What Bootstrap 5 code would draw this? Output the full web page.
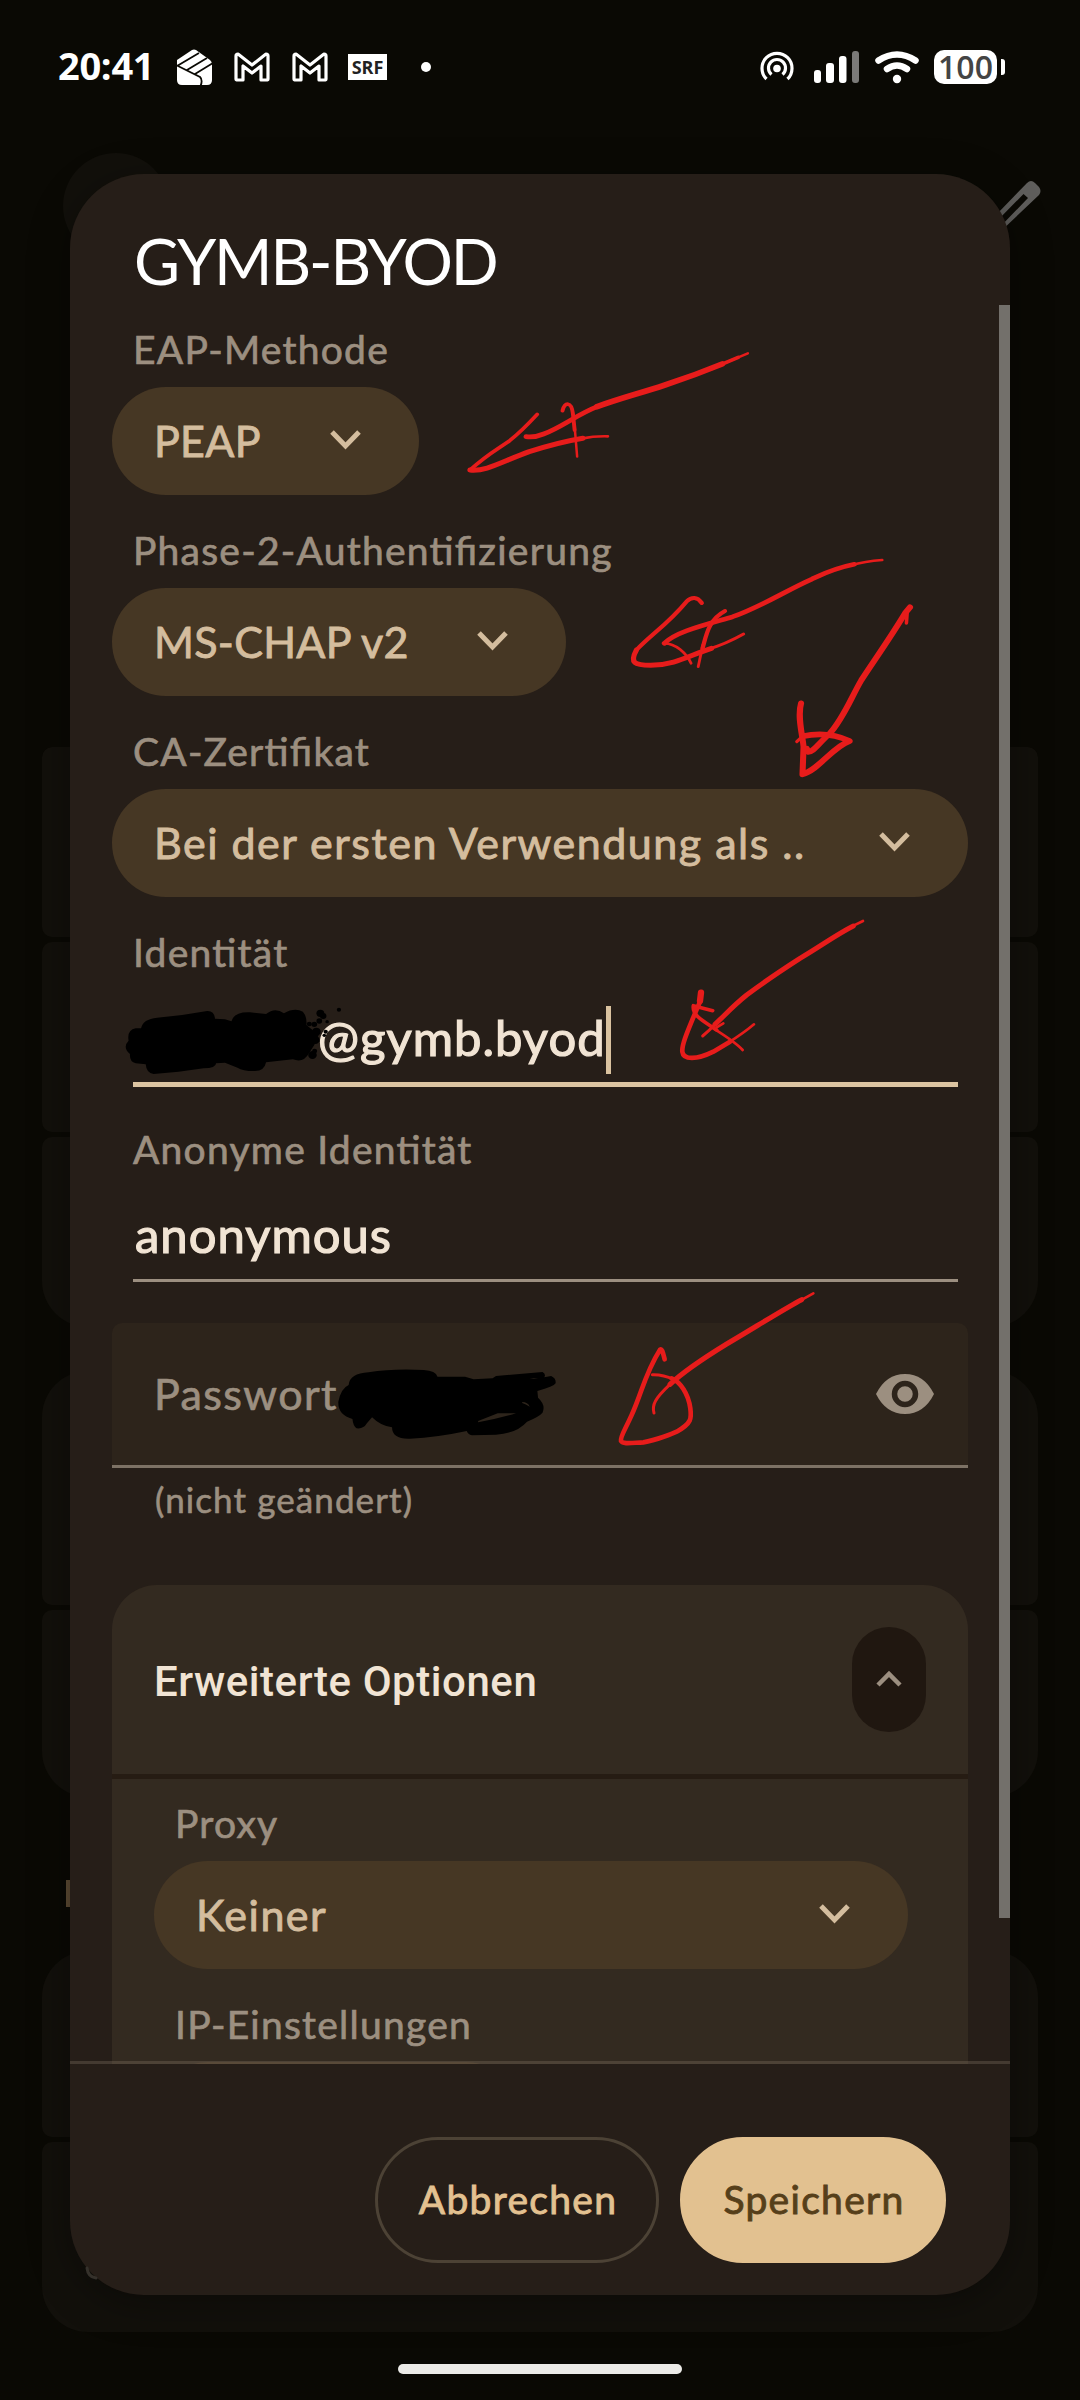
<!DOCTYPE html>
<html lang="de" data-bs-theme="dark">
<head>
<meta charset="utf-8">
<meta name="viewport" content="width=1080">
<title>WLAN bearbeiten</title>
<link href="https://cdn.jsdelivr.net/npm/bootstrap@5.3.0/dist/css/bootstrap.min.css" rel="stylesheet">
<style>
  html, body { width: 1080px; height: 2400px; overflow: hidden; }
  body { background: #0a0904; font-family: Lato, "Open Sans", sans-serif; color: #f1e4d4; position: relative; font-feature-settings: "liga" 1; }
  svg { display: block; flex: none; }
  .statusbar { height: 134px; padding: 0 75px 0 58px; color: #fff; }
  .clock { font: 700 38px/46px "Open Sans", sans-serif; letter-spacing: -.3px; width: 93px; padding-bottom: 5px; height: 50px; }
  .srf { width: 39px; height: 26px; background: #fff; color: #222; font: 700 18px/26px "Open Sans", sans-serif; text-align: center; }
  .batt { width: 63px; height: 34px; border-radius: 10px; background: #fff; color: #444; font: 600 32px/33px "Open Sans", sans-serif; text-align: center; }
  .nub { width: 4px; height: 16px; background: #fff; border-radius: 0 3px 3px 0; }
  .backdrop-list { padding: 613px 42px 0; }
  .bg-group { display: flex; flex-direction: column; gap: 5px; border-radius: 46px; overflow: hidden; }
  .bg-group:first-child { border-radius: 10px 10px 46px 46px; }
  .bg-group + .bg-group { margin-top: 44px; }
  .bg-group:last-child { margin-top: 154px; }
  .bg-row { height: 190px; background: #12100b; border-radius: 10px; }
  .bg-tall { height: 234px; }
  .bg-short { height: 187px; }
  .bg-low { height: 186px; }
  .under, .ink { position: absolute; left: 0; top: 0; }
  .sheet { position: absolute; left: 70px; top: 174px; width: 940px; height: 2121px; border-radius: 74px; background: #261e18; overflow: hidden; padding-top: 49px; box-shadow: 0 8px 40px rgba(0,0,0,.35); }
  .sheet-title { font-size: 63px; line-height: 76px; margin: 0 0 6px 64px; color: #fff; font-weight: 400; letter-spacing: -2.1px; }
  .scroller { height: 1759px; overflow: hidden; padding: 21px 42px 0; position: relative; }
  .thumb { position: absolute; right: 0; top: 0; width: 11px; height: 1613px; background: #73706b; }
  .fld { font-size: 39px; line-height: 47px; height: 48px; margin: 0 0 13px 21px; color: #9c8f80; white-space: nowrap; letter-spacing: 1.25px; -webkit-text-stroke: .7px; }
  .pill + .fld { margin-top: 32px; }
  .pill { height: 108px; border-radius: 54px; background: #463724; color: #d4bd9e; font-size: 43px; padding: 0 0 0 42px; white-space: nowrap; letter-spacing: 1.5px; -webkit-text-stroke: .9px; }
  .pill svg { margin-bottom: 2px; }
  .w-eap { width: 307px; padding-right: 58px; letter-spacing: .3px; } .w-phase { width: 454px; padding-right: 58px; letter-spacing: .3px; }
  .w-ca { width: 856px; padding-right: 58px; } .w-proxy { width: 754px; padding-right: 58px; } .w-ip { width: 366px; }
  .entry { margin: -13px 10px 0 21px; height: 108px; padding: 30px 0 0 2px; border-bottom: 3px solid #9c8f80; font-size: 49px; line-height: 60px; letter-spacing: 1px; -webkit-text-stroke: 1.2px; }
  .entry.active { height: 110px; border-bottom: 5px solid #dcc4a1; margin-bottom: 39px; padding-left: 185px; }
  .caret { width: 5px; height: 68px; background: #d9c29f; margin: -1px 0 0 0; }
  .pw { margin-top: 41px; height: 145px; padding: 0 34px 0 42px; border-radius: 10px 10px 0 0; background: #2d241b; border-bottom: 3px solid #7d7265; color: #9c8f80; font-size: 43px; line-height: 50px; letter-spacing: 1.4px; -webkit-text-stroke: .7px; }
  .hint { margin: 11px 0 66px 43px; font-size: 35px; line-height: 40px; color: #9c8f80; letter-spacing: 1.1px; -webkit-text-stroke: .6px; }
  .adv-head { height: 189px; border-radius: 45px 45px 0 0; background: #332a20; padding: 0 42px 0 42px; font: 500 42px/50px Roboto, sans-serif; margin-bottom: 5px; letter-spacing: .55px; }
  .adv-head .t { padding-top: 4px; }
  .adv-body { background: #332a20; padding: 21px 42px 0; height: 330px; box-shadow: 0 -5px #261c13; }
  .toggle { width: 74px; height: 105px; border-radius: 37px; background: #201710; padding-bottom: 1px; }
  .actions { position: relative; margin-top: -3px; border-top: 3px solid rgba(125,113,98,.35); height: 234px; padding: 73px 64px 0 0; gap: 21px; }
  .act { height: 126px; border-radius: 63px; font-size: 39px; padding: 0 0 2px 2px; border: 3px solid #4c4235; color: #e3c190; letter-spacing: 1.3px; -webkit-text-stroke: .9px; }
  .act-cancel { width: 284px; } .act-save { width: 266px; background: #e2c190; border-color: #e2c190; color: #563f1a; }
  .homebar { position: absolute; left: 398px; top: 2364px; width: 284px; height: 10px; border-radius: 5px; background: #ecebe8; }
</style>
</head>
<body>
<header class="statusbar d-flex align-items-center">
  <span class="clock">20:41</span>
  <svg class="ms-4" width="38" height="38" viewBox="0 0 38 38"><path d="M2 12 17 2q2-1 4 0l14 10q2 2 2 4v16q0 5-5 5H7q-5 0-5-5z" fill="#fff"/><path d="M1 17 25 29Q28 32 25.500 38M2 18 24 5M12 22 32 10M20 26 38 15" fill="none" stroke="#0a0904" stroke-width="1.800"/></svg>
  <svg width="36" height="30" viewBox="0 0 36 30" style="margin-left:21px"><path id="m" d="M2 27V4Q2 2 4 2L18 13 32 2Q34 2 34 4V27Q34 28 32 28H27V14L18 21 9 14V28H4Q2 28 2 27Z" fill="none" stroke="#fff" stroke-width="3.200" stroke-linejoin="round"/></svg>
  <svg width="36" height="30" viewBox="0 0 36 30" style="margin-left:22px"><use href="#m"/></svg>
  <span class="srf" style="margin-left:20px">SRF</span>
  <svg width="10" height="10" style="margin-left:34px"><circle cx="5" cy="5" r="5" fill="#fff"/></svg>
  <div class="ms-auto d-flex align-items-center">
    <svg width="34" height="34" viewBox="0 0 34 34"><g fill="none" stroke="#fff" stroke-width="3.200"><path d="M6.500 29A15 15 0 1 1 27.500 29"/><path d="M11.500 24.500A8.500 8.500 0 1 1 22.500 24.500"/></g><circle cx="17" cy="18.500" r="3.800" fill="#fff"/></svg>
    <svg width="46" height="34" viewBox="0 0 46 34" style="margin-left:20px"><g fill="#fff"><rect x="0" y="20" width="7" height="13" rx="3"/><rect x="12" y="13" width="8" height="20" rx="3"/><rect x="25" y="6" width="7.500" height="27" rx="3"/><rect x="38" y="1" width="7" height="32" rx="3" fill="#7b7a78"/></g></svg>
    <svg width="44" height="34" viewBox="0 0 44 34" style="margin-left:15px"><g fill="none" stroke="#fff" stroke-width="6.500" stroke-linecap="round"><path d="M3.500 10.500Q22-1.500 40.500 10.500"/><path d="M12 19Q22 12 32 19"/></g><circle cx="22" cy="29" r="4.200" fill="#fff"/></svg>
    <span class="batt" style="margin-left:15px">100</span><span class="nub ms-1"></span>
  </div>
</header>

<main class="backdrop-list">
  <div class="bg-group"><div class="bg-row"></div><div class="bg-row"></div><div class="bg-row"></div></div>
  <div class="bg-group"><div class="bg-row bg-tall"></div><div class="bg-row bg-short"></div></div>
  <div class="bg-group"><div class="bg-row bg-low"></div><div class="bg-row"></div></div>
</main>
<svg class="under" width="1080" height="2400"><circle cx="116" cy="206" r="53" fill="#12100b"/><path d="M996 215 1027 183Q1031 179 1035 183L1039 187Q1042 191 1039 195L1000 232ZM996 222 998 229 1028 198 1023.500 194Z" fill="#5f5e5c" fill-rule="evenodd"/><path d="M66 1880h4v27h-4z" fill="#5c4a33"/></svg>

<section class="sheet" role="dialog">
  <h1 class="sheet-title">GYMB-BYOD</h1>
  <div class="scroller">
    <div class="fld">EAP-Methode</div>
    <div class="pill w-eap d-flex align-items-center justify-content-between"><span>PEAP</span><svg width="31" height="20" viewBox="0 0 31 20"><path id="dn" d="M2 2 15.500 16 29 2" fill="none" stroke="#d4bd9e" stroke-width="5"/></svg></div>
    <div class="fld">Phase-2-Authentifizierung</div>
    <div class="pill w-phase d-flex align-items-center justify-content-between"><span>MS-CHAP v2</span><svg width="31" height="20"><use href="#dn"/></svg></div>
    <div class="fld">CA-Zertifikat</div>
    <div class="pill w-ca d-flex align-items-center justify-content-between"><span>Bei der ersten Verwendung als ..</span><svg width="31" height="20"><use href="#dn"/></svg></div>
    <div class="fld">Identität</div>
    <div class="entry active d-flex"><span>@gymb.byod</span><span class="caret"></span></div>
    <div class="fld">Anonyme Identität</div>
    <div class="entry">anonymous</div>
    <div class="pw d-flex align-items-center justify-content-between"><span>Passwort</span>
      <svg width="58" height="40" viewBox="0 0 58 40"><path d="M0 20Q10 0 29 0T58 20Q48 40 29 40T0 20Z" fill="#9c8f80"/><circle cx="29" cy="20" r="10.500" fill="none" stroke="#2d241b" stroke-width="5.500"/></svg></div>
    <div class="hint">(nicht geändert)</div>
    <div class="adv-head d-flex align-items-center justify-content-between"><span class="t">Erweiterte Optionen</span><span class="toggle d-flex align-items-center justify-content-center"><svg width="26" height="18" viewBox="0 0 26 18"><path d="M2 15 13 4 24 15" fill="none" stroke="#9c8f80" stroke-width="4.500"/></svg></span></div>
    <div class="adv-body">
      <div class="fld">Proxy</div>
      <div class="pill w-proxy d-flex align-items-center justify-content-between"><span>Keiner</span><svg width="31" height="20"><use href="#dn"/></svg></div>
      <div class="fld">IP-Einstellungen</div>
      <div class="pill w-ip"></div>
    </div>
    <div class="thumb"></div>
  </div>
  <div class="actions d-flex justify-content-end">
    <button class="btn act act-cancel">Abbrechen</button>
    <button class="btn act act-save">Speichern</button>
  </div>
</section>

<svg class="ink" width="1080" height="2400" fill="none" stroke-linecap="round" stroke-linejoin="round">
  <path d="M87 2268q1 9 9 10" stroke="#35312b" stroke-width="3"/>
  <g fill="#000">
    <g transform="translate(100 720) scale(.35714 .33333)">
      <path d="M115 925Q120 897 160 893L230 885 300 873Q320 872 322 896L350 898 368 904Q375 875 420 877L465 882Q490 860 515 880Q545 862 568 875Q580 890 578 915L612 945 600 975 585 1000Q570 1030 540 1018L465 1027Q460 1055 430 1053 400 1053 385 1043L350 1028 325 1030Q325 1045 290 1045L220 1055 150 1062Q130 1060 128 1033L100 1030Q82 1025 84 1002Q62 982 80 962Q75 930 100 925Z"/>
      <circle cx="617" cy="880" r="11"/><circle cx="625" cy="888" r="9"/><circle cx="669" cy="869" r="6"/><circle cx="636" cy="905" r="5"/><circle cx="600" cy="913" r="8"/><circle cx="614" cy="903" r="8"/><circle cx="586" cy="912" r="7"/><circle cx="606" cy="935" r="12"/><circle cx="632" cy="935" r="6"/><circle cx="628" cy="946" r="5"/><circle cx="603" cy="960" r="12"/><circle cx="595" cy="1005" r="12"/><circle cx="601" cy="993" r="7"/>
    </g>
    <g transform="translate(100 1100) scale(.34438 .33333)">
      <path d="M722 855Q725 820 780 817Q850 805 940 810Q975 812 980 830L1060 830 1085 838 1140 835 1150 828 1285 816Q1296 822 1290 832L1310 828Q1325 835 1323 850Q1318 860 1270 873L1272 893Q1295 915 1285 938Q1275 950 1240 965Q1210 1000 1150 1004L1080 1006Q1068 1003 1065 993Q980 1012 900 1016Q848 1018 848 982Q815 978 790 952L775 970Q765 988 745 985Q735 978 733 957Q690 945 692 905Q700 865 722 855Z"/>
      <path d="M1098 963 1155 940 1208 940Q1160 955 1098 967ZM1226 906Q1242 906 1248 920Q1236 912 1226 909ZM1248 836 1272 834 1260 837Z" fill="#2d241b"/>
    </g>
  </g>
  <g stroke="#e71c1b">
    <g transform="translate(440 330) scale(.35714 .33333)" stroke-width="13">
      <path d="M862 70 800 98" stroke-width="7"/><path d="M835 82 760 116" stroke-width="11"/><path d="M790 102C740 124 690 144 630 165 560 190 500 206 440 230" stroke-width="17"/><path d="M440 230C380 256 340 292 290 312 270 321 255 322 241 320" stroke-width="14"/>
      <path d="M272 253C240 290 215 315 195 332 150 365 130 375 84 420" stroke-width="11"/><path d="M84 420C130 425 170 396 250 365 310 345 360 332 400 325" stroke-width="15"/><path d="M400 325Q430 318 470 319" stroke-width="8"/>
      <path d="M343 242C350 215 368 215 372 250L377 300" stroke-width="11"/><path d="M377 290 384 380" stroke-width="7"/>
      <path d="M1238 690Q1190 694 1150 706" stroke-width="8"/><path d="M1160 703C1100 716 1070 733 1040 748 970 781 900 830 820 860 740 885 660 905 628 940" stroke-width="14"/><path d="M628 940C660 940 690 970 703 1000" stroke-width="8"/>
      <path d="M733 819C720 800 705 800 690 815 640 880 590 915 550 960" stroke-width="12"/><path d="M550 960C530 1000 545 1005 590 1006 660 1005 700 975 760 955" stroke-width="15"/><path d="M750 958Q800 942 850 912" stroke-width="9"/>
      <path d="M798 843C750 870 745 920 735 955" stroke-width="12"/><path d="M736 945 723 1010" stroke-width="8"/>
      <path d="M1306 879 1308 850" stroke-width="10"/><path d="M1316 832 1302 850C1260 925 1210 1000 1180 1050 1150 1105 1130 1165 1090 1212 1060 1240 1045 1268 1030 1266L1027 1256" stroke-width="17"/>
      <path d="M1011 1120C1000 1160 1015 1215 1018 1250L1015 1333C1060 1320 1100 1250 1147 1233 1100 1210 1060 1208 1015 1219" stroke-width="17"/><path d="M1015 1219 999 1235" stroke-width="9"/>
    </g>
    <g transform="translate(560 740) scale(.33333)" stroke-width="14">
      <path d="M909 543 870 562" stroke-width="8"/><path d="M880 558C830 583 780 620 720 655 650 700 600 735 560 765 520 797 500 820 465 853" stroke-width="15"/><path d="M468 850Q450 870 428 888" stroke-width="9"/>
      <path d="M423 758 420 783" stroke-width="19"/><path d="M418 790 405 820C380 880 365 915 367 935 370 960 410 960 460 935L510 905"/><path d="M505 908Q550 880 582 853" stroke-width="8"/>
      <path d="M458 812 400 797C395 830 440 848 470 870" stroke-width="11"/><path d="M460 865C500 890 530 910 548 930M470 862 490 850" stroke-width="8"/>
    </g>
    <g transform="translate(560 1260) scale(.33333)" stroke-width="14">
      <path d="M760 100 710 128" stroke-width="8"/><path d="M725 119C680 142 580 205 500 252 430 295 370 335 330 373" stroke-width="15"/><path d="M330 373C285 415 275 435 282 459" stroke-width="9"/>
      <path d="M314 298C308 275 306 265 300 269 255 340 245 400 215 465 195 510 180 530 183 543 190 553 210 549 250 547 290 540 340 520 350 515 395 490 395 475 391 445 385 400 360 365 335 355"/><path d="M340 358Q310 343 277 344" stroke-width="9"/>
    </g>
  </g>
</svg>
<div class="homebar"></div>
<script src="https://cdn.jsdelivr.net/npm/bootstrap@5.3.0/dist/js/bootstrap.bundle.min.js"></script>
</body>
</html>
